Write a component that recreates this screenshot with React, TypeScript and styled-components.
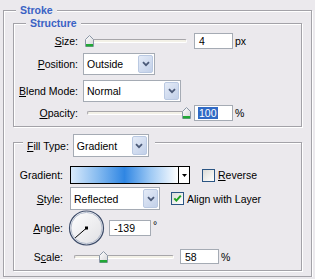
import { FC, useId } from "react";
import styled, { createGlobalStyle } from "styled-components";

const panelBg = "#ebe9ed";
const fieldBorder = "#a5abb4";

const GlobalStyle = createGlobalStyle`
  html, body {
    margin: 0;
    padding: 0;
    background: ${panelBg};
    overflow: hidden;
  }
  body {
    font-family: "Liberation Sans", Arial, sans-serif;
    font-size: 10.5px;
    color: #000;
  }
`;

const GroupBox = styled.div<{ $marginTop: number; $padding: string }>`
  display: flex;
  flex-direction: column;
  margin-top: ${(p) => p.$marginTop}px;
  padding: ${(p) => p.$padding};
  border: 1px solid #a3a2a8;
  box-shadow: inset 1px 1px 0 #fff, 1px 1px 0 #fff;
`;

const OuterBox = styled(GroupBox)`
  margin-left: 3px;
  margin-right: 3px;
`;

const Caption = styled.div<{
  $lift: number;
  $height: number;
  $indent: number;
  $padRight?: number;
}>`
  display: flex;
  align-items: center;
  gap: 4px;
  width: fit-content;
  height: ${(p) => p.$height}px;
  margin: -${(p) => p.$lift}px 0 0 ${(p) => p.$indent}px;
  padding: 0 ${(p) => p.$padRight ?? 4}px 0 4px;
  background: ${panelBg};
`;

const CaptionText = styled.span`
  font-weight: bold;
  color: #3a62c4;
  line-height: 12px;
`;

const Row = styled.div<{ $height: number; $marginTop: number }>`
  display: flex;
  align-items: center;
  height: ${(p) => p.$height}px;
  margin-top: ${(p) => p.$marginTop}px;
`;

const Label = styled.span<{ $width?: number }>`
  flex-shrink: 0;
  width: ${(p) => (p.$width ? `${p.$width}px` : "auto")};
  text-align: right;
  white-space: nowrap;
`;

const Text = styled.span<{ $ml: number; $raise?: number }>`
  margin-left: ${(p) => p.$ml}px;
  white-space: nowrap;
  position: relative;
  top: -${(p) => p.$raise ?? 0}px;
`;

/* ---- slider ---- */

const SliderFrame = styled.div<{ $ml: number; $width: number }>`
  position: relative;
  flex-shrink: 0;
  width: ${(p) => p.$width}px;
  height: 17px;
  margin-left: ${(p) => p.$ml}px;
  padding: 7px 4px 0;
  box-sizing: border-box;
`;

const SliderGroove = styled.div`
  height: 4px;
  box-sizing: border-box;
  border: 1px solid;
  border-color: #a7a6aa #fff #fff #a7a6aa;
  border-radius: 2px;
  background: #f3f1e7;
`;

const ThumbSvg = styled.svg`
  position: absolute;
  top: 3px;
`;

const Slider: FC<{ $ml: number; value: number; min: number; max: number }> = ({
  $ml,
  value,
  min,
  max,
}) => {
  const id = useId();
  const width = 108;
  const frac = (value - min) / (max - min);
  return (
    <SliderFrame $ml={$ml} $width={width}>
      <SliderGroove />
      <ThumbSvg
        width="9"
        height="12"
        viewBox="0 0 9 12"
        style={{ left: 1 + frac * (width - 10) }}
      >
        <defs>
          <linearGradient id={id} x1="0" y1="0" x2="1" y2="1">
            <stop offset="0" stopColor="#ffffff" />
            <stop offset="1" stopColor="#d4d4d8" />
          </linearGradient>
        </defs>
        <path
          d="M4.5 0.5 L8.5 4.5 V11.5 H0.5 V4.5 Z"
          fill={`url(#${id})`}
          stroke="#8a96a6"
        />
        <rect x="1" y="9" width="7" height="2.5" fill="#21a836" />
      </ThumbSvg>
    </SliderFrame>
  );
};

/* ---- text field ---- */

const NumberBox = styled.div<{ $ml: number; $width: number; $height: number }>`
  display: flex;
  align-items: center;
  flex-shrink: 0;
  width: ${(p) => p.$width}px;
  height: ${(p) => p.$height}px;
  margin-left: ${(p) => p.$ml}px;
  padding-left: 4px;
  box-sizing: border-box;
  border: 1px solid ${fieldBorder};
  background: #fff;
`;

const Selected = styled.span`
  background: #316ac5;
  color: #fff;
  padding: 0 1px;
  margin-left: -1px;
`;

/* ---- dropdown ---- */

const SelectBox = styled.div<{ $ml: number; $width: number; $height: number }>`
  display: flex;
  flex-shrink: 0;
  width: ${(p) => p.$width}px;
  height: ${(p) => p.$height}px;
  margin-left: ${(p) => p.$ml}px;
  box-sizing: border-box;
  border: 1px solid ${fieldBorder};
  background: #fff;
`;

const SelectValue = styled.span`
  flex: 1;
  display: flex;
  align-items: center;
  padding-left: 3px;
`;

const SelectButton = styled.span`
  display: flex;
  align-items: center;
  justify-content: center;
  width: 15px;
  margin: 1px;
  box-sizing: border-box;
  border: 1px solid #bac9e2;
  border-radius: 2px;
  background: linear-gradient(135deg, #e4ebf7, #c2d0e9);
`;

const Select: FC<{ $ml: number; $width: number; $height: number; value: string }> = ({
  value,
  ...rest
}) => (
  <SelectBox {...rest}>
    <SelectValue>{value}</SelectValue>
    <SelectButton>
      <svg width="8" height="6" viewBox="0 0 8 6">
        <path d="M1 1.2 L4 4.2 L7 1.2" fill="none" stroke="#4b5a78" strokeWidth="1.8" />
      </svg>
    </SelectButton>
  </SelectBox>
);

/* ---- checkbox ---- */

const CheckFrame = styled.span<{ $ml: number }>`
  display: flex;
  align-items: center;
  justify-content: center;
  flex-shrink: 0;
  width: 13px;
  height: 13px;
  margin-left: ${(p) => p.$ml}px;
  box-sizing: border-box;
  border: 1px solid #2b5583;
  background: linear-gradient(135deg, #dcdcd7, #ffffff);
`;

const Checkbox: FC<{ $ml: number; checked?: boolean }> = ({ $ml, checked }) => (
  <CheckFrame $ml={$ml}>
    {checked && (
      <svg width="9" height="9" viewBox="0 0 9 9">
        <path d="M1.3 4.3 L3.4 6.6 L7.8 1.6" fill="none" stroke="#21a121" strokeWidth="2" />
      </svg>
    )}
  </CheckFrame>
);

/* ---- gradient picker ---- */

const GradientBox = styled.div<{ $ml: number }>`
  display: flex;
  flex-shrink: 0;
  width: 120px;
  height: 18px;
  margin-left: ${(p) => p.$ml}px;
  box-sizing: border-box;
  border: 1px solid #000;
  background: #fff;
`;

const GradientSwatch = styled.div`
  flex: 1;
  background: linear-gradient(
    90deg,
    #d9eafb 0%,
    #86bbf0 25%,
    #2f86e3 50%,
    #9cc8f4 74%,
    #ffffff 100%
  );
`;

const GradientArrow = styled.div`
  display: flex;
  align-items: center;
  justify-content: center;
  width: 10px;
  border-left: 1px solid #000;
`;

/* ---- angle dial ---- */

const AngleDial: FC<{ $ml: number; angle: number }> = ({ $ml, angle }) => {
  const id = useId();
  const rad = (angle * Math.PI) / 180;
  const cx = 18.5;
  const cy = 18;
  const r = 15;
  return (
    <svg width="38" height="36" viewBox="0 0 38 36" style={{ marginLeft: $ml, flexShrink: 0 }}>
      <defs>
        <linearGradient id={id} x1="0" y1="0" x2="1" y2="1">
          <stop offset="0" stopColor="#ffffff" />
          <stop offset="1" stopColor="#dfdfe3" />
        </linearGradient>
      </defs>
      <circle cx={cx} cy={cy} r="17" fill={`url(#${id})`} stroke="#3d4c6a" strokeWidth="1.2" />
      <circle cx={cx} cy={cy} r="15.6" fill="none" stroke="#b3bccd" strokeWidth="1" />
      <line
        x1={cx}
        y1={cy}
        x2={cx + r * Math.cos(rad)}
        y2={cy - r * Math.sin(rad)}
        stroke="#000"
        strokeWidth="1"
      />
      <rect x={cx - 1.5} y={cy - 1.5} width="3" height="3" fill="#000" />
    </svg>
  );
};

const App: FC = () => (
  <>
    <GlobalStyle />
    <OuterBox $marginTop={10} $padding="0 9px 5px">
      <Caption $lift={7} $height={12} $indent={3}>
        <CaptionText>Stroke</CaptionText>
      </Caption>

      <GroupBox $marginTop={7} $padding="0 0 5px">
        <Caption $lift={7} $height={12} $indent={12}>
          <CaptionText>Structure</CaptionText>
        </Caption>
        <Row $height={17} $marginTop={3}>
          <Label $width={64}>
            <u>S</u>ize:
          </Label>
          <Slider $ml={5} value={4} min={1} max={250} />
          <NumberBox $ml={3} $width={39} $height={16}>
            4
          </NumberBox>
          <Text $ml={2}>px</Text>
        </Row>
        <Row $height={22} $marginTop={4}>
          <Label $width={64}>
            <u>P</u>osition:
          </Label>
          <Select $ml={5} $width={72} $height={22} value="Outside" />
        </Row>
        <Row $height={22} $marginTop={5}>
          <Label $width={64}>
            <u>B</u>lend Mode:
          </Label>
          <Select $ml={5} $width={98} $height={22} value="Normal" />
        </Row>
        <Row $height={17} $marginTop={2}>
          <Label $width={64}>
            <u>O</u>pacity:
          </Label>
          <Slider $ml={5} value={100} min={0} max={100} />
          <NumberBox $ml={3} $width={39} $height={16}>
            <Selected>100</Selected>
          </NumberBox>
          <Text $ml={2}>%</Text>
        </Row>
      </GroupBox>

      <GroupBox $marginTop={15} $padding="0 0 5px">
        <Caption $lift={9} $height={23} $indent={9} $padRight={6}>
          <Label>
            <u>F</u>ill Type:
          </Label>
          <Select $ml={0} $width={76} $height={23} value="Gradient" />
        </Caption>
        <Row $height={18} $marginTop={9}>
          <Label $width={49}>Gradient:</Label>
          <GradientBox $ml={7}>
            <GradientSwatch />
            <GradientArrow>
              <svg width="5" height="3" viewBox="0 0 5 3">
                <path d="M0 0 H5 L2.5 3 Z" fill="#000" />
              </svg>
            </GradientArrow>
          </GradientBox>
          <Checkbox $ml={12} />
          <Text $ml={3}>
            <u>R</u>everse
          </Text>
        </Row>
        <Row $height={23} $marginTop={3}>
          <Label $width={49}>
            <u>S</u>tyle:
          </Label>
          <Select $ml={7} $width={90} $height={23} value="Reflected" />
          <Checkbox $ml={11} checked />
          <Text $ml={3}>Align with Layer</Text>
        </Row>
        <Row $height={36} $marginTop={0}>
          <Label $width={49}>
            <u>A</u>ngle:
          </Label>
          <AngleDial $ml={5} angle={-139} />
          <NumberBox $ml={3} $width={42} $height={16}>
            -139
          </NumberBox>
          <Text $ml={2} $raise={3}>
            °
          </Text>
        </Row>
        <Row $height={17} $marginTop={2}>
          <Label $width={49}>
            S<u>c</u>ale:
          </Label>
          <Slider $ml={7} value={58} min={1} max={200} />
          <NumberBox $ml={2} $width={39} $height={15}>
            58
          </NumberBox>
          <Text $ml={2}>%</Text>
        </Row>
      </GroupBox>
    </OuterBox>
  </>
);

export default App;
